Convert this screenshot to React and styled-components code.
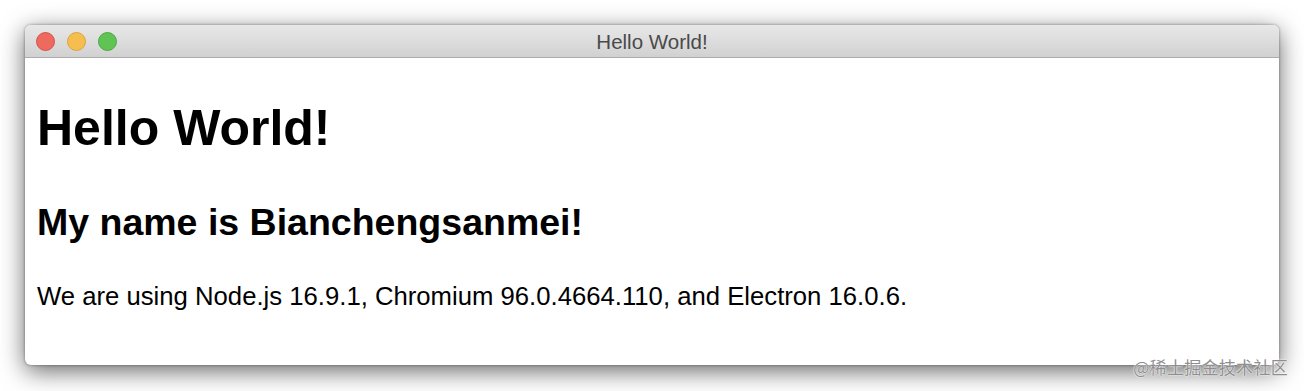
import styled, { createGlobalStyle } from "styled-components"

const GlobalStyle = createGlobalStyle`
    html, body {
        margin: 0;
        padding: 0;
        background: #ffffff;
    }
    body {
        font-family: "Liberation Sans", Arial, sans-serif;
    }
`

const Page = styled.div`
    position: relative;
    width: 1304px;
    height: 391px;
    padding: 25px 25px 0 25px;
    box-sizing: border-box;
    overflow: hidden;
`

const Window = styled.div`
    display: flex;
    flex-direction: column;
    width: 1254px;
    height: 340px;
    border-radius: 6px;
    background: #ffffff;
    box-shadow: 0 6px 24px rgba(0, 0, 0, 0.6), 0 0 3px rgba(0, 0, 0, 0.4);
    overflow: hidden;
`

const TitleBar = styled.div`
    position: relative;
    display: flex;
    align-items: center;
    justify-content: center;
    height: 32px;
    flex-shrink: 0;
    background: linear-gradient(#e9e8e9, #d2d1d2);
    border-bottom: 1px solid #acacac;
`

const Lights = styled.div`
    position: absolute;
    left: 11px;
    top: 7px;
    display: flex;
    gap: 12px;
`

const Light = styled.span`
    width: 19px;
    height: 19px;
    border-radius: 50%;
    box-sizing: border-box;
    background: ${p => p.$color};
    border: 1px solid ${p => p.$edge};
`

const Title = styled.div`
    font-size: 20.5px;
    color: #4a4a4a;
    margin-top: 1px;
`

const Content = styled.div`
    flex: 1;
    padding: 40px 12px 0 12px;
    color: #000000;
`

const H1 = styled.h1`
    margin: 0;
    font-size: 50px;
    line-height: 60px;
    font-weight: bold;
`

const H2 = styled.h2`
    margin: 42px 0 0 0;
    font-size: 37.5px;
    line-height: 44px;
    font-weight: bold;
`

const Text = styled.p`
    margin: 37px 0 0 0;
    font-size: 25.7px;
    line-height: 30px;
`

const Watermark = styled.div`
    position: absolute;
    right: 16px;
    bottom: 12px;
    font-family: "Noto Sans CJK SC", sans-serif;
    font-size: 17px;
    color: #8f8f8f;
    text-shadow: 0 0 2px #ffffff, 0 0 1px #ffffff;
    letter-spacing: 0.3px;
`

export default function App() {
    return (
        <Page>
            <GlobalStyle />
            <Window>
                <TitleBar>
                    <Lights>
                        <Light $color="#ee6a5f" $edge="#d65248" />
                        <Light $color="#f6be4f" $edge="#dba53c" />
                        <Light $color="#5fc454" $edge="#4aa93f" />
                    </Lights>
                    <Title>Hello World!</Title>
                </TitleBar>
                <Content>
                    <H1>Hello World!</H1>
                    <H2>My name is Bianchengsanmei!</H2>
                    <Text>We are using Node.js 16.9.1, Chromium 96.0.4664.110, and Electron 16.0.6.</Text>
                </Content>
            </Window>
            <Watermark>@稀土掘金技术社区</Watermark>
        </Page>
    )
}
